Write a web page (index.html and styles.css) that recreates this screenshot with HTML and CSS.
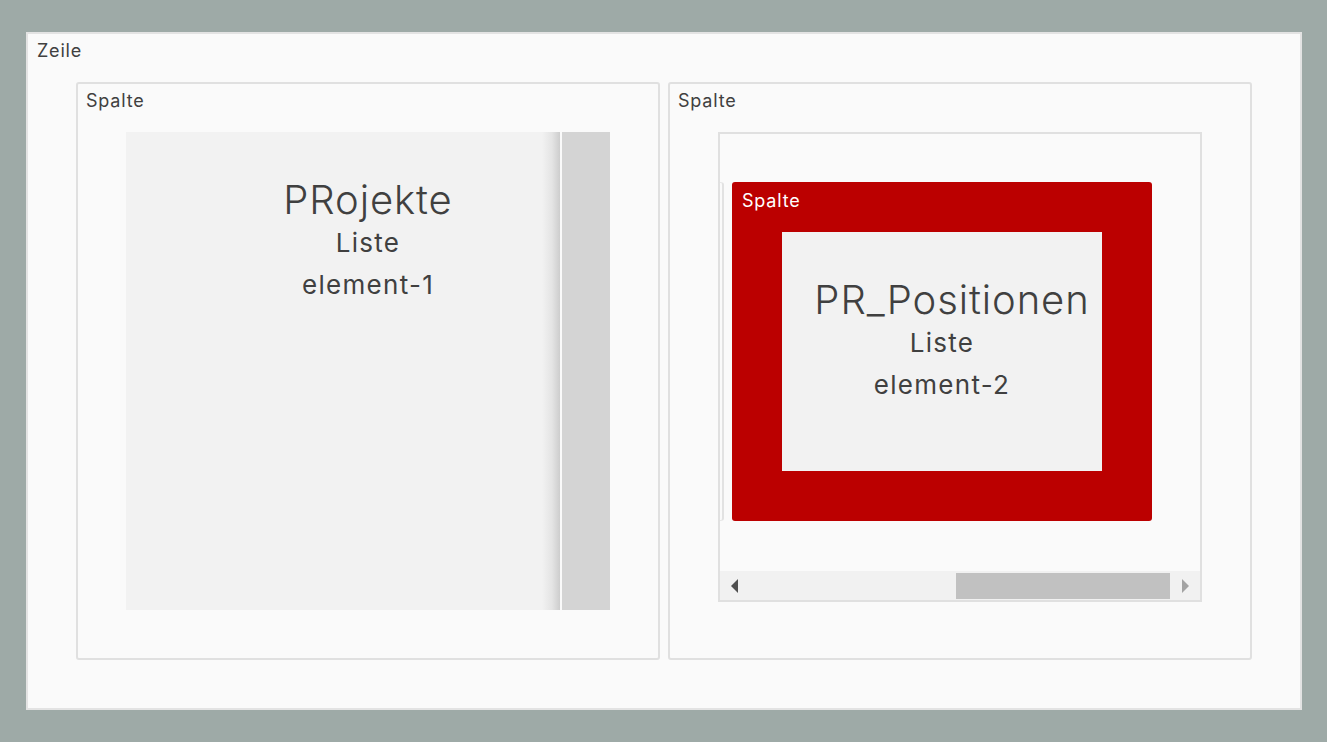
FILE: index.html
```html
<!DOCTYPE html>
<html lang="de">
<head>
<meta charset="utf-8">
<title>Zeile</title>
<link rel="stylesheet" href="styles.css">
</head>
<body>
<div class="zeile">
  <span class="label">Zeile</span>
  <div class="spalte">
    <span class="label">Spalte</span>
    <div class="liste1">
      <div class="panel"></div>
      <div class="vbar"></div>
      <div class="texts">
        <div class="title">PRojekte</div>
        <div class="line">Liste</div>
        <div class="line">element-1</div>
      </div>
    </div>
  </div>
  <div class="spalte">
    <span class="label">Spalte</span>
    <div class="scrollbox">
      <div class="scroll-content">
        <div class="sliver"></div>
        <div class="red">
          <span class="label light">Spalte</span>
          <div class="inner">
            <div class="title shifted">PR_Positionen</div>
            <div class="line">Liste</div>
            <div class="line">element-2</div>
          </div>
        </div>
      </div>
      <div class="hbar">
        <span class="arrow-left"></span>
        <span class="thumb"></span>
        <span class="arrow-right"></span>
      </div>
    </div>
  </div>
</div>
</body>
</html>
```

FILE: styles.css
```css
html, body {
  margin: 0;
  height: 100%;
}
body {
  background: #9eaaa7;
  padding: 32px 25px 32px 26px;
  box-sizing: border-box;
  font-family: Inter, "Noto Sans", sans-serif;
  color: #404040;
}
.zeile {
  position: relative;
  box-sizing: border-box;
  height: 678px;
  background: #fafafa;
  border: 2px solid #e3e3e3;
  padding: 48px;
  display: flex;
  gap: 8px;
}
.label {
  position: absolute;
  left: 8px;
  top: 6px;
  font-size: 18px;
  line-height: 21px;
  letter-spacing: 0.8px;
  color: #404040;
}
.zeile > .label {
  left: 9px;
  top: 6px;
}
.spalte {
  position: relative;
  flex: 1;
  box-sizing: border-box;
  border: 2px solid #e0e0e0;
  border-radius: 3px;
  padding: 48px;
  display: flex;
  flex-direction: column;
}
.liste1 {
  display: grid;
  grid-template-columns: 1fr 2px 48px;
  height: 478px;
}
.panel {
  grid-column: 1;
  grid-row: 1;
  background: linear-gradient(to right, #f2f2f2 0, #f2f2f2 calc(100% - 18px), #e4e4e4 calc(100% - 8px), #cdcdcd 100%);
}
.vbar {
  grid-column: 3;
  grid-row: 1;
  background: #d4d4d4;
}
.texts {
  grid-column: 1 / span 3;
  grid-row: 1;
  text-align: center;
  padding-top: 46px;
}
.title {
  font-size: 40px;
  line-height: 44px;
  font-weight: 300;
  letter-spacing: 0.9px;
  color: #404040;
}
.line {
  font-size: 26px;
  line-height: 42px;
  letter-spacing: 1.3px;
  color: #404040;
}
.scrollbox {
  box-sizing: border-box;
  height: 470px;
  border: 2px solid #e0e0e0;
  display: flex;
  flex-direction: column;
}
.scroll-content {
  flex: 1;
  padding-top: 48px;
  display: flex;
  align-items: flex-start;
  gap: 8px;
}
.sliver {
  width: 4px;
  height: 339px;
  border-right: 2px solid #e2e2e2;
  border-top: 1px solid #e8e8e8;
  border-bottom: 1px solid #e8e8e8;
  box-sizing: border-box;
  border-radius: 0 3px 3px 0;
}
.red {
  position: relative;
  box-sizing: border-box;
  width: 420px;
  height: 339px;
  background: #bb0000;
  border-radius: 3px;
  padding: 50px;
}
.label.light {
  color: #ffffff;
  left: 10px;
  top: 8px;
}
.inner {
  height: 239px;
  background: #f2f2f2;
  text-align: center;
  padding-top: 46px;
  box-sizing: border-box;
}
.shifted {
  padding-left: 20px;
}
.hbar {
  height: 29px;
  background: #f1f1f1;
  display: flex;
  align-items: center;
}
.arrow-left {
  margin-left: 11px;
  width: 0;
  height: 0;
  border-top: 7px solid transparent;
  border-bottom: 7px solid transparent;
  border-right: 7px solid #505050;
}
.thumb {
  margin-left: 218px;
  width: 214px;
  height: 26px;
  margin-top: 1px;
  background: #c1c1c1;
}
.arrow-right {
  margin-left: 12px;
  width: 0;
  height: 0;
  border-top: 7px solid transparent;
  border-bottom: 7px solid transparent;
  border-left: 7px solid #a3a3a3;
}
```
